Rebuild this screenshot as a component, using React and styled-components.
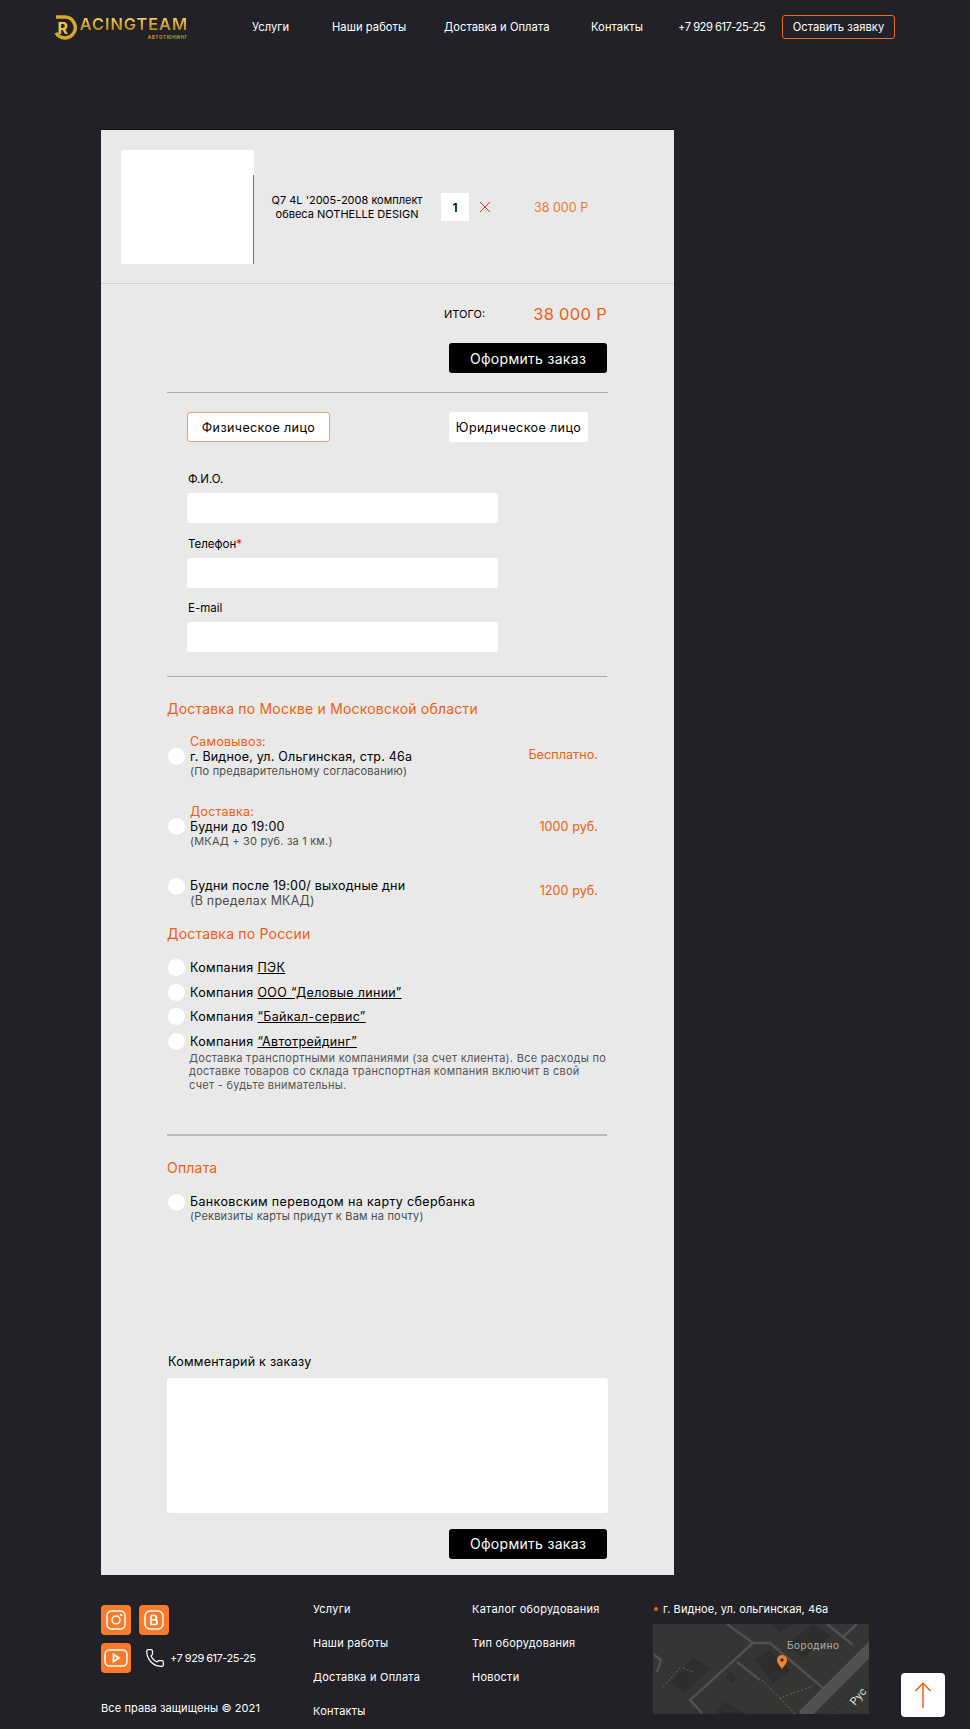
import styled, { createGlobalStyle } from "styled-components";
import { Phone } from "lucide-react";

const ORANGE = "#ee5f10";

const GlobalStyle = createGlobalStyle`
  html, body {
    margin: 0;
    padding: 0;
    background: #212127;
  }
  * { box-sizing: border-box; }
  body {
    font-family: "Inter", "Noto Sans", sans-serif;
    color: #000;
  }
`;

const Page = styled.div`
  width: 970px;
  height: 1729px;
  overflow: hidden;
  background: #212127;
`;

const Header = styled.header`
  display: grid;
  grid-template-columns: 198px 80px 112px 147px 87px 104px 113px;
  align-items: center;
  height: 54px;
  padding-left: 54px;
  color: #fff;
  font-size: 11.2px;
  letter-spacing: 0.05px;
`;

const HeaderPhone = styled.a`
  letter-spacing: -0.5px;
`;

const Logo = styled.div`
  display: flex;
  align-items: flex-start;
  width: 134px;
  height: 26px;
`;

const LogoWords = styled.div`
  display: flex;
  flex-direction: column;
  align-items: flex-end;
  margin-left: 1px;
  padding-top: 3px;
`;

const LogoName = styled.span`
  font-size: 16.5px;
  line-height: 15px;
  font-weight: 600;
  letter-spacing: 0.85px;
  color: transparent;
  background: linear-gradient(180deg, #f7d768 0%, #d8a838 45%, #a97a1c 100%);
  -webkit-background-clip: text;
  background-clip: text;
`;

const LogoSub = styled.span`
  margin-top: 3px;
  font-size: 4.5px;
  line-height: 5px;
  font-weight: 700;
  letter-spacing: 0.75px;
  color: #c9992c;
`;

const CallButton = styled.a`
  display: flex;
  align-items: center;
  justify-content: center;
  height: 24px;
  border: 1px solid #e8692c;
  border-radius: 3px;
`;

const Panel = styled.main`
  width: 573px;
  margin: 75px 0 0 101px;
  background: #e9e9e9;
  border-top: 1px solid #111;
  padding-bottom: 16px;
`;

const Item = styled.section`
  display: flex;
  align-items: center;
  height: 154px;
  padding: 1px 0 0 20px;
  border-bottom: 1px solid #cfcfcf;
`;

const ItemPhoto = styled.div`
  width: 133px;
  height: 114px;
  background: linear-gradient(#fff, #fff) left / 132px 100% no-repeat,
    linear-gradient(#fff 22%, #77777a 22%);
`;

const ItemTitle = styled.div`
  width: 160px;
  margin-left: 13px;
  text-align: center;
  white-space: nowrap;
  font-size: 11px;
  line-height: 14px;
`;

const Quantity = styled.div`
  display: flex;
  align-items: center;
  justify-content: center;
  width: 28px;
  height: 28px;
  margin-left: 14px;
  background: #fff;
  font-size: 12px;
  font-weight: 600;
`;

const RemoveIcon = styled.svg`
  width: 12px;
  height: 12px;
  margin-left: 10px;
`;

const ItemPrice = styled.div`
  margin-left: 43px;
  color: #f0782c;
  font-size: 12.5px;
`;

const Body = styled.div`
  padding: 0 66px;
`;

const TotalRow = styled.div`
  display: flex;
  align-items: center;
  justify-content: flex-end;
  height: 20px;
  margin-top: 20px;
  padding-right: 1px;
`;

const TotalLabel = styled.span`
  font-size: 11px;
`;

const TotalValue = styled.span`
  margin-left: 48px;
  color: ${ORANGE};
  font-size: 16.5px;
  letter-spacing: 0.3px;
`;

const ButtonRow = styled.div`
  display: flex;
  justify-content: flex-end;
  margin-top: ${(p) => p.$top}px;
  padding-right: 1px;
`;

const SubmitButton = styled.button`
  width: 158px;
  height: 30px;
  border: 0;
  border-radius: 3px;
  background: #000;
  color: #fff;
  font: 400 14px "Inter", sans-serif;
  letter-spacing: 0.3px;
`;

const Divider = styled.hr`
  height: ${(p) => p.$thick || 1}px;
  width: ${(p) => p.$width || 441}px;
  margin: ${(p) => p.$top}px 0 0;
  border: 0;
  background: ${(p) => (p.$thick ? "#bbb" : "#adadad")};
`;

const Tabs = styled.div`
  display: flex;
  gap: 119px;
  margin-top: 19px;
  padding-left: 20px;
`;

const Tab = styled.button`
  width: ${(p) => p.$width}px;
  height: 30px;
  padding: 0;
  border: ${(p) => (p.$active ? "1px solid #e5a274" : "0")};
  border-radius: 3px;
  background: #fff;
  color: #000;
  font: 400 12.5px "Inter", sans-serif;
  letter-spacing: 0.4px;
`;

const Fields = styled.div`
  display: flex;
  flex-direction: column;
  gap: 12.5px;
  margin-top: 29px;
  padding-left: 20px;
`;

const Field = styled.label`
  display: block;
`;

const FieldName = styled.span`
  display: block;
  padding-left: 1px;
  font-size: 11.5px;
  line-height: 16px;
  font-weight: 400;
`;

const Required = styled.span`
  color: #d5102a;
`;

const TextInput = styled.input`
  display: block;
  width: 311px;
  height: 30px;
  margin-top: 6px;
  border: 0;
  border-radius: 3px;
  background: #fff;
`;

const Heading = styled.h2`
  height: 20px;
  margin: ${(p) => p.$top}px 0 0;
  color: ${ORANGE};
  font-size: 14px;
  line-height: 20px;
  font-weight: 400;
  letter-spacing: 0.2px;
`;

const Option = styled.label`
  display: flex;
  align-items: ${(p) => (p.$alignTop ? "flex-start" : "center")};
  justify-content: space-between;
  margin-top: ${(p) => p.$top}px;
  padding: 0 10px 0 1px;
`;

const OptionMain = styled.div`
  display: flex;
  align-items: ${(p) => (p.$alignTop ? "flex-start" : "center")};
`;

const Radio = styled.input.attrs({ type: "radio" })`
  appearance: none;
  flex: none;
  width: 17px;
  height: 17px;
  margin: 0 5px 0 0;
  border-radius: 50%;
  background: #fff;
`;

const OptionText = styled.div`
  font-size: 12.5px;
  line-height: 15px;
  font-weight: 400;
  letter-spacing: ${(p) => p.$spacing || 0.2}px;
`;

const OptionKind = styled.div`
  color: ${ORANGE};
`;

const OptionNote = styled.div`
  color: #4d4d4d;
  font-size: ${(p) => p.$size || 11}px;
  letter-spacing: 0.2px;
`;

const OptionPrice = styled.div`
  margin: ${(p) => p.$drop || 0}px 0 ${(p) => p.$lift || 0}px;
  color: ${ORANGE};
  font-size: 12.7px;
`;

const Companies = styled.div`
  display: flex;
  flex-direction: column;
  gap: 7.5px;
  margin-top: 15.5px;
  padding-left: 1px;
`;

const Company = styled.label`
  display: flex;
  align-items: center;
  height: 17px;
  font-size: 12.5px;
  letter-spacing: 0.3px;
`;

const CompanyLink = styled.a`
  margin-left: 4px;
  color: #000;
  text-decoration: underline;
`;

const CompanyNote = styled.p`
  margin: 2px 0 0;
  padding-left: 22px;
  white-space: nowrap;
  color: #565656;
  font-size: 11px;
  line-height: 13.5px;
  letter-spacing: 0.27px;
`;

const CommentLabel = styled.label`
  display: block;
  margin-top: 129.5px;
  padding-left: 1px;
  font-size: 12.5px;
  line-height: 16px;
  letter-spacing: 0.25px;
`;

const CommentBox = styled.textarea`
  display: block;
  width: 441px;
  height: 135px;
  margin-top: 8px;
  border: 0;
  border-radius: 3px;
  background: #fff;
  resize: none;
`;

const Footer = styled.footer`
  display: grid;
  grid-template-columns: 212px 159px 181px 216px;
  margin-left: 101px;
  padding-top: 26px;
  color: #fff;
  font-size: 11px;
  line-height: 16px;
  letter-spacing: 0.25px;
`;

const Contacts = styled.div`
  padding-top: 4px;
`;

const SocialRow = styled.div`
  display: flex;
  align-items: center;
  gap: 8px;
  height: 30px;
  margin-bottom: 8px;
`;

const Social = styled.a`
  display: flex;
  align-items: center;
  justify-content: center;
  width: 30px;
  height: 30px;
  border-radius: 4px;
  background: #f97a2a;
`;

const FooterPhone = styled.a`
  display: flex;
  align-items: center;
  gap: 5px;
  margin-left: 6px;
  letter-spacing: -0.5px;
`;

const Copyright = styled.div`
  margin-top: 27px;
  letter-spacing: 0.1px;
`;

const FooterNav = styled.nav`
  display: flex;
  flex-direction: column;
  gap: 18px;
`;

const Address = styled.div`
  display: flex;
  align-items: center;
  gap: 5px;
  padding-left: 1px;
  letter-spacing: 0.08px;
`;

const Dot = styled.span`
  width: 4px;
  height: 4px;
  border-radius: 50%;
  background: ${ORANGE};
`;

const MapBox = styled.svg`
  display: block;
  width: 216px;
  height: 90px;
  margin-top: 7px;
`;

const UpButton = styled.button`
  position: fixed;
  right: 25px;
  bottom: 12px;
  display: flex;
  align-items: center;
  justify-content: center;
  width: 44px;
  height: 44px;
  padding: 0;
  border: 0;
  border-radius: 4px;
  background: #fff;
`;

const Instagram = () => (
  <svg width="20" height="20" viewBox="0 0 20 20" fill="none" stroke="#fff" strokeWidth="1.5">
    <rect x="1" y="1" width="18" height="18" rx="4.5" />
    <circle cx="10" cy="10" r="4" />
    <circle cx="15" cy="5" r="0.6" fill="#fff" />
  </svg>
);

const Vk = () => (
  <svg width="20" height="20" viewBox="0 0 20 20" fill="none" stroke="#fff" strokeWidth="1.5">
    <rect x="1" y="1" width="18" height="18" rx="5" />
    <path d="M7 5.5v9h3.8c1.4 0 2.4-.9 2.4-2.4 0-1.3-1-2.2-2.4-2.2H7m0 0h3.3c1.2 0 2.1-.8 2.1-2.1 0-1.3-.9-2.3-2.2-2.3H7" strokeWidth="1.7" />
  </svg>
);

const Youtube = () => (
  <svg width="24" height="20" viewBox="0 0 24 20" fill="none" stroke="#fff" strokeWidth="1.5">
    <rect x="1" y="2" width="22" height="16" rx="4.5" />
    <path d="M9.5 6.5v7l5.5-3.5z" strokeWidth="1.8" />
  </svg>
);

const roads = [
  "74,0 100,19 117,19 170,64",
  "100,19 37,76 49,89",
  "84,38 107,56",
  "174,0 200,21",
  "190,13 204,0",
  "0,30 8,36 4,48",
];

const blocks = [
  "102,36 117,26 137,46 120,59",
  "17,59 40,34 57,44 32,69",
  "72,53 77,48 84,54 79,59",
  "120,0 127,8 140,0",
  "150,34 134,20 160,0 178,12",
  "60,90 72,78 92,90",
];

const MapPreview = () => (
  <MapBox viewBox="0 0 216 90">
    <rect width="216" height="90" fill="#353533" />
    {blocks.map((points) => (
      <polygon key={points} points={points} fill="#2d2d2b" />
    ))}
    {roads.map((points) => (
      <polyline key={points} points={points} fill="none" stroke="#505050" strokeWidth="2.5" />
    ))}
    <path d="M150 92 L222 20" stroke="#515150" strokeWidth="12" />
    <path d="M176 92 L222 50" stroke="#2b2b29" strokeWidth="1" />
    <path d="M109 56 L127 74 L160 62 M127 74 L142 90 M10 63 L27 44 M30 44 L40 48" fill="none" stroke="#6a6a66" strokeWidth="1" strokeDasharray="2 2" />
    <text x="134" y="25" fill="#a9a9a6" fontSize="10.5" fontFamily="Roboto, sans-serif" letterSpacing="0.5">Бородино</text>
    <text x="202" y="82" fill="#e0e0de" fontSize="11" fontFamily="Roboto, sans-serif" transform="rotate(-50 202 82)">Рус</text>
    <path d="M129 45c-3-4-5-6.500-5-9a5 5 0 0 1 10 0c0 2.500-2 5-5 9z" fill="#f5812a" />
    <circle cx="129" cy="36" r="1.700" fill="#2d2d2b" />
  </MapBox>
);

const App = () => (
  <Page>
    <GlobalStyle />
    <Header>
      <Logo>
        <svg width="25" height="26" viewBox="0 0 25 26" fill="none">
          <path d="M2 3h9a10.500 10.500 0 1 1-9 16" stroke="#d9a62f" strokeWidth="3.500" />
          <text x="3.500" y="20" fontSize="16" fontWeight="700" fontFamily="Inter, sans-serif" fill="#eec24a">R</text>
        </svg>
        <LogoWords>
          <LogoName>ACINGTEAM</LogoName>
          <LogoSub>АВТОТЮНИНГ</LogoSub>
        </LogoWords>
      </Logo>
      <a>Услуги</a>
      <a>Наши работы</a>
      <a>Доставка и Оплата</a>
      <a>Контакты</a>
      <HeaderPhone>+7 929 617-25-25</HeaderPhone>
      <CallButton>Оставить заявку</CallButton>
    </Header>

    <Panel>
      <Item>
        <ItemPhoto />
        <ItemTitle>Q7 4L '2005-2008 комплект<br />обвеса NOTHELLE DESIGN</ItemTitle>
        <Quantity>1</Quantity>
        <RemoveIcon viewBox="0 0 12 12" fill="none" stroke="#d8322c" strokeWidth="1">
          <path d="M1 1l10 10M11 1L1 11" />
        </RemoveIcon>
        <ItemPrice>38 000 Р</ItemPrice>
      </Item>

      <Body>
        <TotalRow>
          <TotalLabel>ИТОГО:</TotalLabel>
          <TotalValue>38 000 Р</TotalValue>
        </TotalRow>
        <ButtonRow $top={19}>
          <SubmitButton>Оформить заказ</SubmitButton>
        </ButtonRow>
        <Divider $top={19} />

        <Tabs>
          <Tab $active $width={143}>Физическое лицо</Tab>
          <Tab $width={139}>Юридическое лицо</Tab>
        </Tabs>

        <Fields>
          <Field>
            <FieldName>Ф.И.О.</FieldName>
            <TextInput />
          </Field>
          <Field>
            <FieldName>Телефон<Required>*</Required></FieldName>
            <TextInput />
          </Field>
          <Field>
            <FieldName>E-mail</FieldName>
            <TextInput />
          </Field>
        </Fields>
        <Divider $top={24} $width={440} />

        <Heading $top={22}>Доставка по Москве и Московской области</Heading>
        <Option $top={15}>
          <OptionMain>
            <Radio name="delivery" />
            <OptionText>
              <OptionKind>Самовывоз:</OptionKind>
              г. Видное, ул. Ольгинская, стр. 46а
              <OptionNote>(По предварительному согласованию)</OptionNote>
            </OptionText>
          </OptionMain>
          <OptionPrice $lift={4}>Бесплатно.</OptionPrice>
        </Option>
        <Option $top={25}>
          <OptionMain>
            <Radio name="delivery" />
            <OptionText>
              <OptionKind>Доставка:</OptionKind>
              Будни до 19:00
              <OptionNote>(МКАД + 30 руб. за 1 км.)</OptionNote>
            </OptionText>
          </OptionMain>
          <OptionPrice>1000 руб.</OptionPrice>
        </Option>
        <Option $top={29} $alignTop>
          <OptionMain $alignTop>
            <Radio name="delivery" />
            <OptionText>
              Будни после 19:00/ выходные дни
              <OptionNote $size={12.5}>(В пределах МКАД)</OptionNote>
            </OptionText>
          </OptionMain>
          <OptionPrice $drop={5}>1200 руб.</OptionPrice>
        </Option>

        <Heading $top={15.5}>Доставка по России</Heading>
        <Companies>
          <Company><Radio name="delivery" />Компания <CompanyLink>ПЭК</CompanyLink></Company>
          <Company><Radio name="delivery" />Компания <CompanyLink>ООО “Деловые линии”</CompanyLink></Company>
          <Company><Radio name="delivery" />Компания <CompanyLink>“Байкал-сервис”</CompanyLink></Company>
          <Company><Radio name="delivery" />Компания <CompanyLink>“Автотрейдинг”</CompanyLink></Company>
        </Companies>
        <CompanyNote>
          Доставка транспортными компаниями (за счет клиента). Все расходы по<br />
          доставке товаров со склада транспортная компания включит в свой<br />
          счет - будьте внимательны.
        </CompanyNote>
        <Divider $top={42} $thick={2} $width={440} />

        <Heading $top={22}>Оплата</Heading>
        <Option $top={16} $alignTop>
          <OptionMain $alignTop>
            <Radio name="payment" />
            <OptionText $spacing={0.35}>
              Банковским переводом на карту сбербанка
              <OptionNote>(Реквизиты карты придут к Вам на почту)</OptionNote>
            </OptionText>
          </OptionMain>
        </Option>

        <CommentLabel>Комментарий к заказу</CommentLabel>
        <CommentBox />
        <ButtonRow $top={16}>
          <SubmitButton>Оформить заказ</SubmitButton>
        </ButtonRow>
      </Body>
    </Panel>

    <Footer>
      <Contacts>
        <SocialRow>
          <Social><Instagram /></Social>
          <Social><Vk /></Social>
        </SocialRow>
        <SocialRow>
          <Social><Youtube /></Social>
          <FooterPhone>
            <Phone size={20} strokeWidth={1.5} />
            +7 929 617-25-25
          </FooterPhone>
        </SocialRow>
        <Copyright>Все права защищены © 2021</Copyright>
      </Contacts>
      <FooterNav>
        <a>Услуги</a>
        <a>Наши работы</a>
        <a>Доставка и Оплата</a>
        <a>Контакты</a>
      </FooterNav>
      <FooterNav>
        <a>Каталог оборудования</a>
        <a>Тип оборудования</a>
        <a>Новости</a>
      </FooterNav>
      <div>
        <Address><Dot />г. Видное, ул. ольгинская, 46а</Address>
        <MapPreview />
      </div>
    </Footer>

    <UpButton>
      <svg width="18" height="28" viewBox="0 0 18 28" fill="none" stroke={ORANGE} strokeWidth="1.5">
        <path d="M9 27V2M1.500 10L9 2l7.500 8" />
      </svg>
    </UpButton>
  </Page>
);

export default App;
